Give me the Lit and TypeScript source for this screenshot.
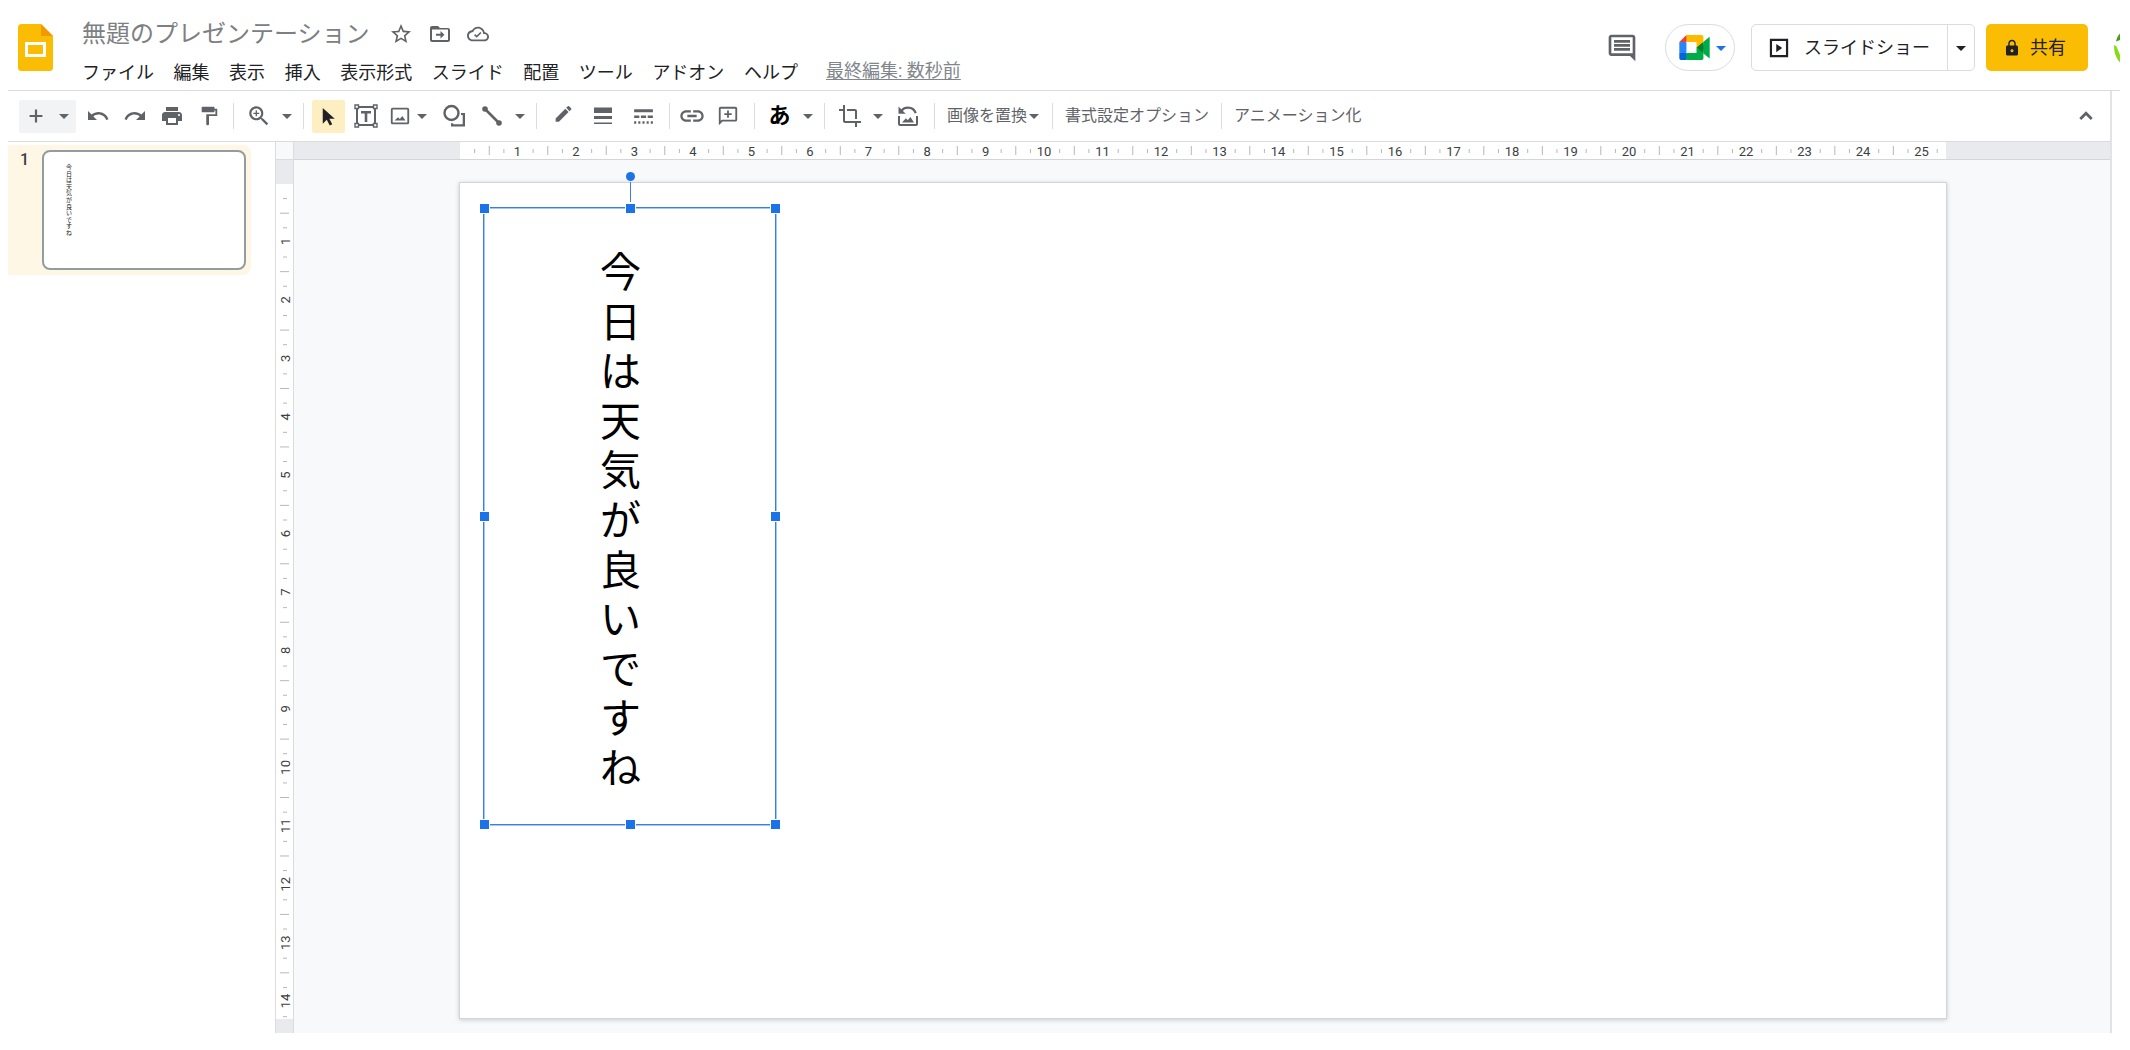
import { LitElement, html, svg, css } from "lit";
import { customElement, property } from "lit/decorators.js";

const TEXT = [..."今日は天気が良いですね"];
const MENUS = ["ファイル", "編集", "表示", "挿入", "表示形式", "スライド", "配置", "ツール", "アドオン", "ヘルプ"];
const SLIDE_WIDTH_CM = 25.4;
const SLIDE_HEIGHT_CM = 14.29;

const material = (path: unknown, size = 24) =>
  html`<svg width=${size} height=${size} viewBox="0 0 24 24" fill="currentColor" aria-hidden="true">${path}</svg>`;

const arrow = html`<svg width="12" height="12" viewBox="0 0 12 12" fill="currentColor" aria-hidden="true"><path d="M1 4h10L6 9z" /></svg>`;

const icons = {
  star: svg`<path d="M22 9.24l-7.19-.62L12 2 9.19 8.63 2 9.24l5.46 4.73L5.82 21 12 17.27 18.18 21l-1.63-7.03L22 9.24zM12 15.4l-3.76 2.27 1-4.28-3.32-2.88 4.38-.38L12 6.1l1.71 4.04 4.38.38-3.32 2.88 1 4.28L12 15.4z"/>`,
  move: svg`<path d="M20 6h-8l-2-2H4c-1.1 0-2 .9-2 2v12c0 1.1.9 2 2 2h16c1.1 0 2-.9 2-2V8c0-1.1-.9-2-2-2zm0 12H4V7.500h16V18zm-7.500-1.500l4-3.750-4-3.750v2.750H8v2h4.500z"/>`,
  cloud: svg`<path d="M19.350 10.040C18.670 6.590 15.640 4 12 4 9.110 4 6.600 5.640 5.350 8.040 2.340 8.360 0 10.910 0 14c0 3.310 2.690 6 6 6h13c2.760 0 5-2.240 5-5 0-2.640-2.050-4.780-4.650-4.960zM19 18H6c-2.210 0-4-1.790-4-4 0-2.050 1.530-3.760 3.560-3.970l1.070-.11.5-.95C8.080 7.140 9.940 6 12 6c2.620 0 4.880 1.860 5.390 4.430l.3 1.500 1.530.11c1.560.1 2.780 1.410 2.780 2.960 0 1.650-1.350 3-3 3z"/><path d="M10.600 16.200l-2.900-2.900 1.300-1.300 1.600 1.600 3.900-3.900 1.300 1.300z"/>`,
  plus: svg`<path d="M19 13.200h-5.800V19h-2.400v-5.800H5v-2.400h5.800V5h2.400v5.800H19z"/>`,
  undo: svg`<path d="M12.500 8c-2.650 0-5.050.99-6.900 2.600L2 7v9h9l-3.620-3.620c1.390-1.160 3.160-1.880 5.120-1.880 3.540 0 6.550 2.310 7.600 5.500l2.370-.78C21.080 11.030 17.150 8 12.500 8z"/>`,
  redo: svg`<path d="M18.400 10.600C16.550 8.990 14.150 8 11.500 8c-4.650 0-8.580 3.030-9.960 7.220L3.900 16c1.050-3.190 4.050-5.500 7.600-5.500 1.950 0 3.730.72 5.120 1.880L13 16h9V7l-3.600 3.600z"/>`,
  print: svg`<path d="M19 8H5c-1.660 0-3 1.340-3 3v6h4v4h12v-4h4v-6c0-1.660-1.340-3-3-3zm-3 11H8v-5h8v5zm3-7c-.55 0-1-.45-1-1s.45-1 1-1 1 .45 1 1-.45 1-1 1zm-1-9H6v4h12V3z"/>`,
  paint: svg`<path d="M18 4V3c0-.55-.45-1-1-1H5c-.55 0-1 .45-1 1v4c0 .55.45 1 1 1h12c.55 0 1-.45 1-1V6h1v4H9v11c0 .55.45 1 1 1h1c.55 0 1-.45 1-1v-9h9V4h-3z"/>`,
  zoom: svg`<path d="M15.500 14h-.79l-.28-.27C15.410 12.590 16 11.110 16 9.500 16 5.910 13.090 3 9.500 3S3 5.910 3 9.500 5.910 16 9.500 16c1.610 0 3.090-.59 4.230-1.570l.27.28v.79l5 4.990L20.490 19l-4.990-5zm-6 0C7.010 14 5 11.990 5 9.500S7.010 5 9.500 5 14 7.010 14 9.500 11.990 14 9.500 14zm.6-7.200H8.900v2.100H6.800v1.200h2.100v2.100h1.200v-2.100h2.100V8.900h-2.100z"/>`,
  cursor: svg`<path d="M6 3v16.500l4.200-4 3.100 6 2.600-1.300-3-5.900h5.600z"/>`,
  textbox: svg`<path fill="none" stroke="currentColor" stroke-width="2" d="M4 3h16M4 21h16M3 4v16M21 4v16"/><path fill="#fff" stroke="currentColor" stroke-width="1.400" d="M1 1h3.500v3.500H1zM19.500 1H23v3.500h-3.500zM1 19.500h3.500V23H1zM19.500 19.500H23V23h-3.500z"/><path d="M7 7h10v2.500h-3.700V18h-2.600V9.500H7z"/>`,
  image: svg`<path d="M20 3H4a2 2 0 0 0-2 2v14a2 2 0 0 0 2 2h16a2 2 0 0 0 2-2V5a2 2 0 0 0-2-2zm0 16H4V5h16zM6 17h12l-3.500-5-2.700 3.400-2-2z"/>`,
  shape: svg`<circle cx="8.500" cy="9" r="7" fill="none" stroke="currentColor" stroke-width="2.400"/><path d="M18 9h4v13.500H8v-3.300h2.200v1.100h9.500V11H18z"/>`,
  line: svg`<path d="M5 5l14 14" stroke="currentColor" stroke-width="2.600"/><circle cx="5" cy="5" r="2.800"/><circle cx="19" cy="19" r="2.800"/>`,
  pencil: svg`<path d="M3 14.250V18h3.750L17.810 6.940l-3.750-3.750L3 14.250zM20.710 4.040a1 1 0 0 0 0-1.410L18.370.29a1 1 0 0 0-1.410 0l-1.830 1.830 3.750 3.750 1.830-1.830z"/>`,
  weight: svg`<path d="M3 3.500h18V9H3zM3 12h18v3H3zM3 18.500h18V20H3z"/>`,
  dash: svg`<path d="M3 5h18v3H3zM3 11h5v2.500H3zM9.500 11h5v2.500h-5zM16 11h5v2.500h-5zM3 16.500h2V19H3zM7 16.500h2V19H7zM11 16.500h2V19h-2zM15 16.500h2V19h-2zM19 16.500h2V19h-2z"/>`,
  link: svg`<path d="M3.900 12c0-1.710 1.390-3.100 3.100-3.100h4V7H7c-2.760 0-5 2.240-5 5s2.240 5 5 5h4v-1.900H7c-1.710 0-3.100-1.390-3.100-3.100zM8 13h8v-2H8v2zm9-6h-4v1.900h4c1.710 0 3.100 1.390 3.100 3.100s-1.390 3.100-3.100 3.100h-4V17h4c2.760 0 5-2.240 5-5s-2.240-5-5-5z"/>`,
  addComment: svg`<path d="M20 2H4c-1.100 0-2 .9-2 2v18l4-4h14c1.100 0 2-.9 2-2V4c0-1.100-.9-2-2-2zm0 14H5.200L4 17.200V4h16v12zM11 14h2v-3h3V9h-3V6h-2v3H8v2h3z"/>`,
  crop: svg`<path d="M17 15h2V7c0-1.100-.9-2-2-2H9v2h8v8zM7 17V1H5v4H1v2h4v10c0 1.100.9 2 2 2h10v4h2v-4h4v-2H7z"/>`,
  replace: svg`<path d="M2 12h2v8h16v-8h2v8a2 2 0 0 1-2 2H4a2 2 0 0 1-2-2zM6 18.500h12l-3.600-5.500-2.600 3.300-1.900-2z"/><path d="M5 7.500C6.500 5 9 3.600 12 3.600c3.700 0 6.600 2.300 7.700 5.600" fill="none" stroke="currentColor" stroke-width="2.200"/><path d="M2.500 2.500v7.300h7.200z"/>`,
  up: svg`<path d="M12 7.600l-6.200 6.200 1.800 1.800 4.400-4.400 4.400 4.400 1.800-1.800z"/>`,
  comments: svg`<path d="M21.990 4c0-1.100-.89-2-1.990-2H4c-1.100 0-2 .9-2 2v12c0 1.100.9 2 2 2h14l4 4-.01-18zM20 4v12H4V4h16zM6 12h12v2H6zm0-3h12v2H6zm0-3h12v2H6z"/>`,
  present: svg`<path fill="none" stroke="currentColor" stroke-width="2.400" d="M3.200 3.200h17.600v17.600H3.200z"/><path d="M9 7.500v9l6.500-4.500z"/>`,
  lock: svg`<path d="M18 8.500h-1V6c0-2.760-2.240-5-5-5S7 3.240 7 6v2.500H6c-1.100 0-2 .9-2 2V20c0 1.100.9 2 2 2h12c1.100 0 2-.9 2-2v-9.500c0-1.100-.9-2-2-2zM12 17.500c-1.100 0-2-.9-2-2s.9-2 2-2 2 .9 2 2-.9 2-2 2zm3.100-9H8.900V6c0-1.710 1.390-3.100 3.100-3.100s3.100 1.390 3.100 3.100z"/>`,
};

const slidesLogo = html`<svg width="35" height="47" viewBox="0 0 35 47" aria-hidden="true">
  <path fill="#fbbc04" d="M3.500 0H23l12 12v31.500a3.500 3.500 0 0 1-3.500 3.500h-28A3.500 3.500 0 0 1 0 43.500v-40A3.500 3.500 0 0 1 3.500 0z" />
  <path fill="#f29900" d="M23 0l12 12H23z" />
  <path fill="#fff" fill-rule="evenodd" d="M7 18h21v15H7zm3 3v9h15v-9z" />
</svg>`;

const meetLogo = html`<svg width="31" height="25" viewBox="0 0 87.500 72" aria-hidden="true">
  <path fill="#00832d" d="M49.500 36l8.530 9.750 11.470 7.330 2-17.020-2-16.640-11.690 6.440z" />
  <path fill="#0066da" d="M0 51.500V66c0 3.315 2.685 6 6 6h14.500l3-10.960-3-9.540-9.950-3z" />
  <path fill="#e94235" d="M20.500 0L0 20.500l10.550 3 9.950-3 2.950-9.410z" />
  <path fill="#2684fc" d="M20.500 20.500H0v31h20.500z" />
  <path fill="#00ac47" d="M87.500 4.700L69.500 19.420v33.660L87.500 67.800zM49.500 36v15.500h-29V72h43c3.315 0 6-2.685 6-6V53.080z" />
  <path fill="#ffba00" d="M63.500 0h-43v20.500h29V36l20-16.570V6c0-3.315-2.685-6-6-6z" />
</svg>`;

const avatar = html`<svg width="6" height="47" viewBox="0 0 6 47" aria-hidden="true">
  <path fill="#4f9a1c" d="M6 9.500V16l-4 1.500C2.600 14.300 4 11.500 6 9.500z" />
  <path fill="#84dc12" d="M0 21l2.500 1.500L6 31v7.500C2 34 0 28.500 0 21z" />
</svg>`;

@customElement("slide-ruler")
export class SlideRuler extends LitElement {
  @property({ type: Number }) length = SLIDE_WIDTH_CM;
  @property({ type: Boolean, reflect: true }) vertical = false;

  static styles = css`
    :host {
      display: block;
      background: #fff;
      overflow: hidden;
    }
    svg {
      display: block;
      width: 100%;
      height: 100%;
    }
    .tick {
      stroke: #b4b8bb;
      stroke-width: 1;
    }
    .number {
      font: 400 13px Roboto, "Liberation Sans", sans-serif;
      fill: #3c4043;
      text-anchor: middle;
    }
  `;

  render() {
    const marks = [];
    for (let quarter = 1; quarter / 4 < this.length; quarter++) {
      const at = `${(quarter * 25) / this.length}%`;
      if (quarter % 4 === 0) {
        const label = quarter / 4;
        marks.push(
          this.vertical
            ? svg`<svg x="0" y=${at} overflow="visible"><text class="number" x="1" y="14" transform="rotate(-90)">${label}</text></svg>`
            : svg`<text class="number" x=${at} y="14" dx="-1">${label}</text>`
        );
      } else {
        const from = quarter % 2 ? 7 : 4;
        const to = quarter % 2 ? 11 : 13;
        marks.push(
          this.vertical
            ? svg`<line class="tick" x1=${from} x2=${to} y1=${at} y2=${at} />`
            : svg`<line class="tick" x1=${at} x2=${at} y1=${from} y2=${to} />`
        );
      }
    }
    return html`<svg aria-hidden="true">${marks}</svg>`;
  }
}

@customElement("app-root")
export class AppRoot extends LitElement {
  static styles = css`
    :host {
      display: block;
      background: #fff;
      color: #202124;
      font-family: Roboto, "Noto Sans CJK JP", sans-serif;
      font-size: 18px;
      line-height: 24px;
      padding: 0 10px 16px 8px;
    }
    * {
      box-sizing: border-box;
    }
    svg {
      display: block;
      flex: none;
    }
    button {
      display: flex;
      align-items: center;
      justify-content: center;
      border: 0;
      padding: 0;
      margin: 0;
      background: none;
      color: inherit;
      font: inherit;
      white-space: nowrap;
    }
    h1,
    p,
    ol {
      margin: 0;
      padding: 0;
      font-weight: normal;
      list-style: none;
    }

    .header {
      display: flex;
      align-items: flex-start;
      height: 91px;
      padding-left: 10px;
      border-bottom: 1px solid #dadce0;
      overflow: hidden;
    }
    .logo {
      margin-top: 24px;
    }
    .titles {
      flex: 1;
      margin: 16px 0 0 29px;
    }
    .title-row {
      display: flex;
      align-items: center;
      gap: 15px;
      height: 36px;
      color: #5f6368;
    }
    .title {
      margin-right: 4px;
      color: #7d8083;
      font-size: 24px;
      line-height: 36px;
    }
    .menu-row {
      display: flex;
      align-items: center;
      height: 42px;
    }
    .menus {
      display: flex;
      justify-content: space-between;
      width: 716px;
    }
    .edited {
      margin: 0 0 4px 28px;
      color: #80868b;
      text-underline-offset: 2px;
    }
    .actions {
      display: flex;
      align-items: center;
      height: 47px;
      margin-top: 24px;
    }
    .comments {
      width: 32px;
      color: #5f6368;
    }
    .meet {
      gap: 5px;
      width: 70px;
      height: 47px;
      margin-left: 27px;
      padding-left: 5px;
      border: 1px solid #dadce0;
      border-radius: 24px;
      color: #1a73e8;
    }
    .slideshow {
      display: flex;
      height: 47px;
      margin-left: 16px;
      border: 1px solid #dadce0;
      border-radius: 5px;
    }
    .present {
      gap: 14px;
      padding: 0 17px 0 16px;
    }
    .present-menu {
      width: 27px;
      border-left: 1px solid #dadce0;
    }
    .share {
      gap: 9px;
      width: 102px;
      height: 47px;
      margin-left: 11px;
      padding-right: 5px;
      border-radius: 5px;
      background: #fbbc04;
    }
    .account {
      margin-left: 26px;
    }

    .body {
      display: flex;
    }
    .main {
      flex: 1;
      min-width: 0;
    }
    .side {
      width: 10px;
      border-left: 2px solid #e1e3e6;
    }
    .toolbar {
      display: flex;
      align-items: center;
      height: 51px;
      padding-left: 11px;
      border-bottom: 1px solid #dadce0;
      color: #5f6368;
      font-size: 16px;
    }
    .new {
      gap: 11px;
      width: 57px;
      height: 33px;
      margin-right: 3px;
      border-radius: 2px;
      background: #f1f3f4;
    }
    .tool {
      width: 37px;
      height: 33px;
    }
    .narrow {
      width: 32px;
    }
    .wide {
      width: 40px;
    }
    .drop {
      width: 20px;
      height: 33px;
    }
    .near {
      justify-content: flex-start;
    }
    .active {
      width: 33px;
      margin: 0 2px;
      border-radius: 2px;
      background: #feefc3;
      color: #202124;
    }
    .input-mode {
      color: #000;
      font-size: 22px;
      font-weight: bold;
    }
    .label {
      gap: 1px;
      padding: 0 6px;
    }
    .divider {
      width: 1px;
      height: 26px;
      margin: 0 6px;
      background: #dadce0;
    }
    .collapse {
      margin: 0 11px 0 auto;
    }

    .editor {
      display: flex;
    }
    .filmstrip {
      width: 267px;
      padding-top: 3px;
    }
    .film {
      display: flex;
      gap: 13px;
      width: 243px;
      padding: 5px 5px 5px 12px;
      border-radius: 0 8px 8px 0;
      background: #fef7e5;
      font-size: 16px;
    }
    .film-number {
      width: 9px;
      color: #3c4043;
      font-weight: 500;
      line-height: 20px;
    }
    .thumb {
      flex: 1;
      aspect-ratio: 17 / 10;
      padding: 12px 0 0 22px;
      border: 2px solid #929da0;
      border-radius: 8px;
      background: #fff;
    }
    .thumb-text {
      display: flex;
      flex-direction: column;
      justify-content: space-between;
      width: 6px;
      height: 72px;
      color: #202124;
      font-size: 6px;
      line-height: 6px;
    }

    .workspace {
      flex: 1;
      display: grid;
      grid-template-columns: 19px minmax(0, 1fr);
      grid-template-rows: 18px auto;
      min-width: 0;
      background: #f8f9fa;
    }
    .corner {
      border: 1px solid #dadce0;
      border-top: 0;
    }
    .ruler-x {
      display: grid;
      grid-template-columns: 166px minmax(0, 1fr) 164px;
      border-bottom: 1px solid #d2d5d9;
      background: #e8eaed;
    }
    .ruler-y {
      display: grid;
      grid-template-rows: 24px minmax(0, 1fr) 14px;
      border: 1px solid #dadce0;
      border-width: 0 1px;
      background: #e8eaed;
    }
    .ruler-x slide-ruler {
      grid-column: 2;
    }
    .ruler-y slide-ruler {
      grid-row: 2;
    }
    .stage {
      padding: 22px 163px 14px 165px;
    }
    .slide {
      position: relative;
      aspect-ratio: 16 / 9;
      border: 1px solid #d3d6d9;
      background: #fff;
      box-shadow: 0 1px 4px rgba(60, 64, 67, 0.25);
    }

    /* The text box sits on the slide's free canvas. */
    .selection {
      position: absolute;
      top: 24px;
      left: 23px;
      width: 293px;
      height: 618px;
      padding: 41px 0 31px 116px;
      border: 1px solid #3b7de0;
      box-shadow: 1px 1px 0 #a4c6fa, inset 1px 1px 0 #a4c6fa;
    }
    .vertical-text {
      display: flex;
      flex-direction: column;
      align-items: center;
      justify-content: space-between;
      width: 41px;
      height: 100%;
      color: #000;
      font-size: 41px;
      line-height: 48px;
    }
    .handle {
      position: absolute;
      width: 11px;
      height: 11px;
      margin: -5px;
      border: 1px solid #fff;
      background: #1a73e8;
    }
    .stem {
      position: absolute;
      top: -26px;
      left: 50%;
      width: 1px;
      height: 20px;
      background: #3b7de0;
    }
    .rotate {
      position: absolute;
      top: -36px;
      left: 50%;
      width: 9px;
      height: 9px;
      margin-left: -4px;
      border-radius: 50%;
      background: #1a73e8;
    }
    .n { top: 0; left: 50%; }
    .s { top: 100%; left: 50%; }
    .w { top: 50%; left: 0; }
    .e { top: 50%; left: 100%; }
    .nw { top: 0; left: 0; }
    .ne { top: 0; left: 100%; }
    .sw { top: 100%; left: 0; }
    .se { top: 100%; left: 100%; }
  `;

  private tool(icon: unknown, label: string, extra = "", size = 24) {
    return html`<button class="tool ${extra}" aria-label=${label}>${material(icon, size)}</button>`;
  }

  private drop(label: string, extra = "") {
    return html`<button class="drop ${extra}" aria-label=${label}>${arrow}</button>`;
  }

  private renderHeader() {
    return html`<header class="header">
      <div class="logo">${slidesLogo}</div>
      <div class="titles">
        <div class="title-row">
          <h1 class="title">無題のプレゼンテーション</h1>
          <button aria-label="スターを付ける">${material(icons.star)}</button>
          <button aria-label="移動">${material(icons.move)}</button>
          <button aria-label="保存状況">${material(icons.cloud, 22)}</button>
        </div>
        <div class="menu-row">
          <nav class="menus">${MENUS.map((menu) => html`<button>${menu}</button>`)}</nav>
          <a class="edited" href="#history">最終編集: 数秒前</a>
        </div>
      </div>
      <div class="actions">
        <button class="comments" aria-label="コメント履歴">${material(icons.comments, 32)}</button>
        <button class="meet" aria-label="通話">${meetLogo}${arrow}</button>
        <div class="slideshow">
          <button class="present">${material(icons.present, 22)}スライドショー</button>
          <button class="present-menu" aria-label="スライドショーのオプション">${arrow}</button>
        </div>
        <button class="share">${material(icons.lock, 18)}共有</button>
        <div class="account">${avatar}</div>
      </div>
    </header>`;
  }

  private renderToolbar() {
    const divider = html`<span class="divider"></span>`;
    return html`<div class="toolbar" role="toolbar">
      <button class="new" aria-label="新しいスライド">${material(icons.plus, 22)}${arrow}</button>
      ${this.tool(icons.undo, "元に戻す")} ${this.tool(icons.redo, "やり直し")}
      ${this.tool(icons.print, "印刷")} ${this.tool(icons.paint, "書式を貼り付け", "", 22)}
      ${divider} ${this.tool(icons.zoom, "ズーム", "", 26)} ${this.drop("ズームの倍率")} ${divider}
      ${this.tool(icons.cursor, "選択", "active", 23)} ${this.tool(icons.textbox, "テキスト ボックス")}
      ${this.tool(icons.image, "画像を挿入", "narrow", 22)} ${this.drop("画像の種類", "near")}
      ${this.tool(icons.shape, "図形")} ${this.tool(icons.line, "線")} ${this.drop("線の種類")} ${divider}
      ${this.tool(icons.pencil, "枠線の色", "wide", 21)} ${this.tool(icons.weight, "枠線の太さ", "wide")}
      ${this.tool(icons.dash, "枠線の破線", "wide", 25)} ${divider}
      ${this.tool(icons.link, "リンクを挿入", "narrow", 28)} ${this.tool(icons.addComment, "コメントを追加", "wide", 22)}
      ${divider}
      <button class="tool input-mode" aria-label="入力ツール">あ</button>
      ${this.drop("入力方法")} ${divider} ${this.tool(icons.crop, "切り抜き")} ${this.drop("図形でマスク")}
      ${this.tool(icons.replace, "画像をリセット", "wide")} ${divider}
      <button class="label">画像を置換${arrow}</button>
      ${divider}<button class="label">書式設定オプション</button>${divider}<button class="label">アニメーション化</button>
      <button class="collapse" aria-label="メニューを非表示">${material(icons.up, 26)}</button>
    </div>`;
  }

  private renderSlide() {
    const handles = ["nw", "n", "ne", "w", "e", "sw", "s", "se"];
    return html`<div class="slide">
      <div class="selection">
        <div class="vertical-text">${TEXT.map((c) => html`<span>${c}</span>`)}</div>
        <span class="stem"></span>
        <span class="rotate"></span>
        ${handles.map((side) => html`<span class="handle ${side}"></span>`)}
      </div>
    </div>`;
  }

  render() {
    return html`${this.renderHeader()}
      <div class="body">
        <main class="main">
          ${this.renderToolbar()}
          <div class="editor">
            <ol class="filmstrip">
              <li class="film">
                <span class="film-number">1</span>
                <div class="thumb">
                  <div class="thumb-text">${TEXT.map((c) => html`<span>${c}</span>`)}</div>
                </div>
              </li>
            </ol>
            <section class="workspace">
              <div class="corner"></div>
              <div class="ruler-x"><slide-ruler .length=${SLIDE_WIDTH_CM}></slide-ruler></div>
              <div class="ruler-y"><slide-ruler vertical .length=${SLIDE_HEIGHT_CM}></slide-ruler></div>
              <div class="stage">${this.renderSlide()}</div>
            </section>
          </div>
        </main>
        <aside class="side"></aside>
      </div>`;
  }
}
